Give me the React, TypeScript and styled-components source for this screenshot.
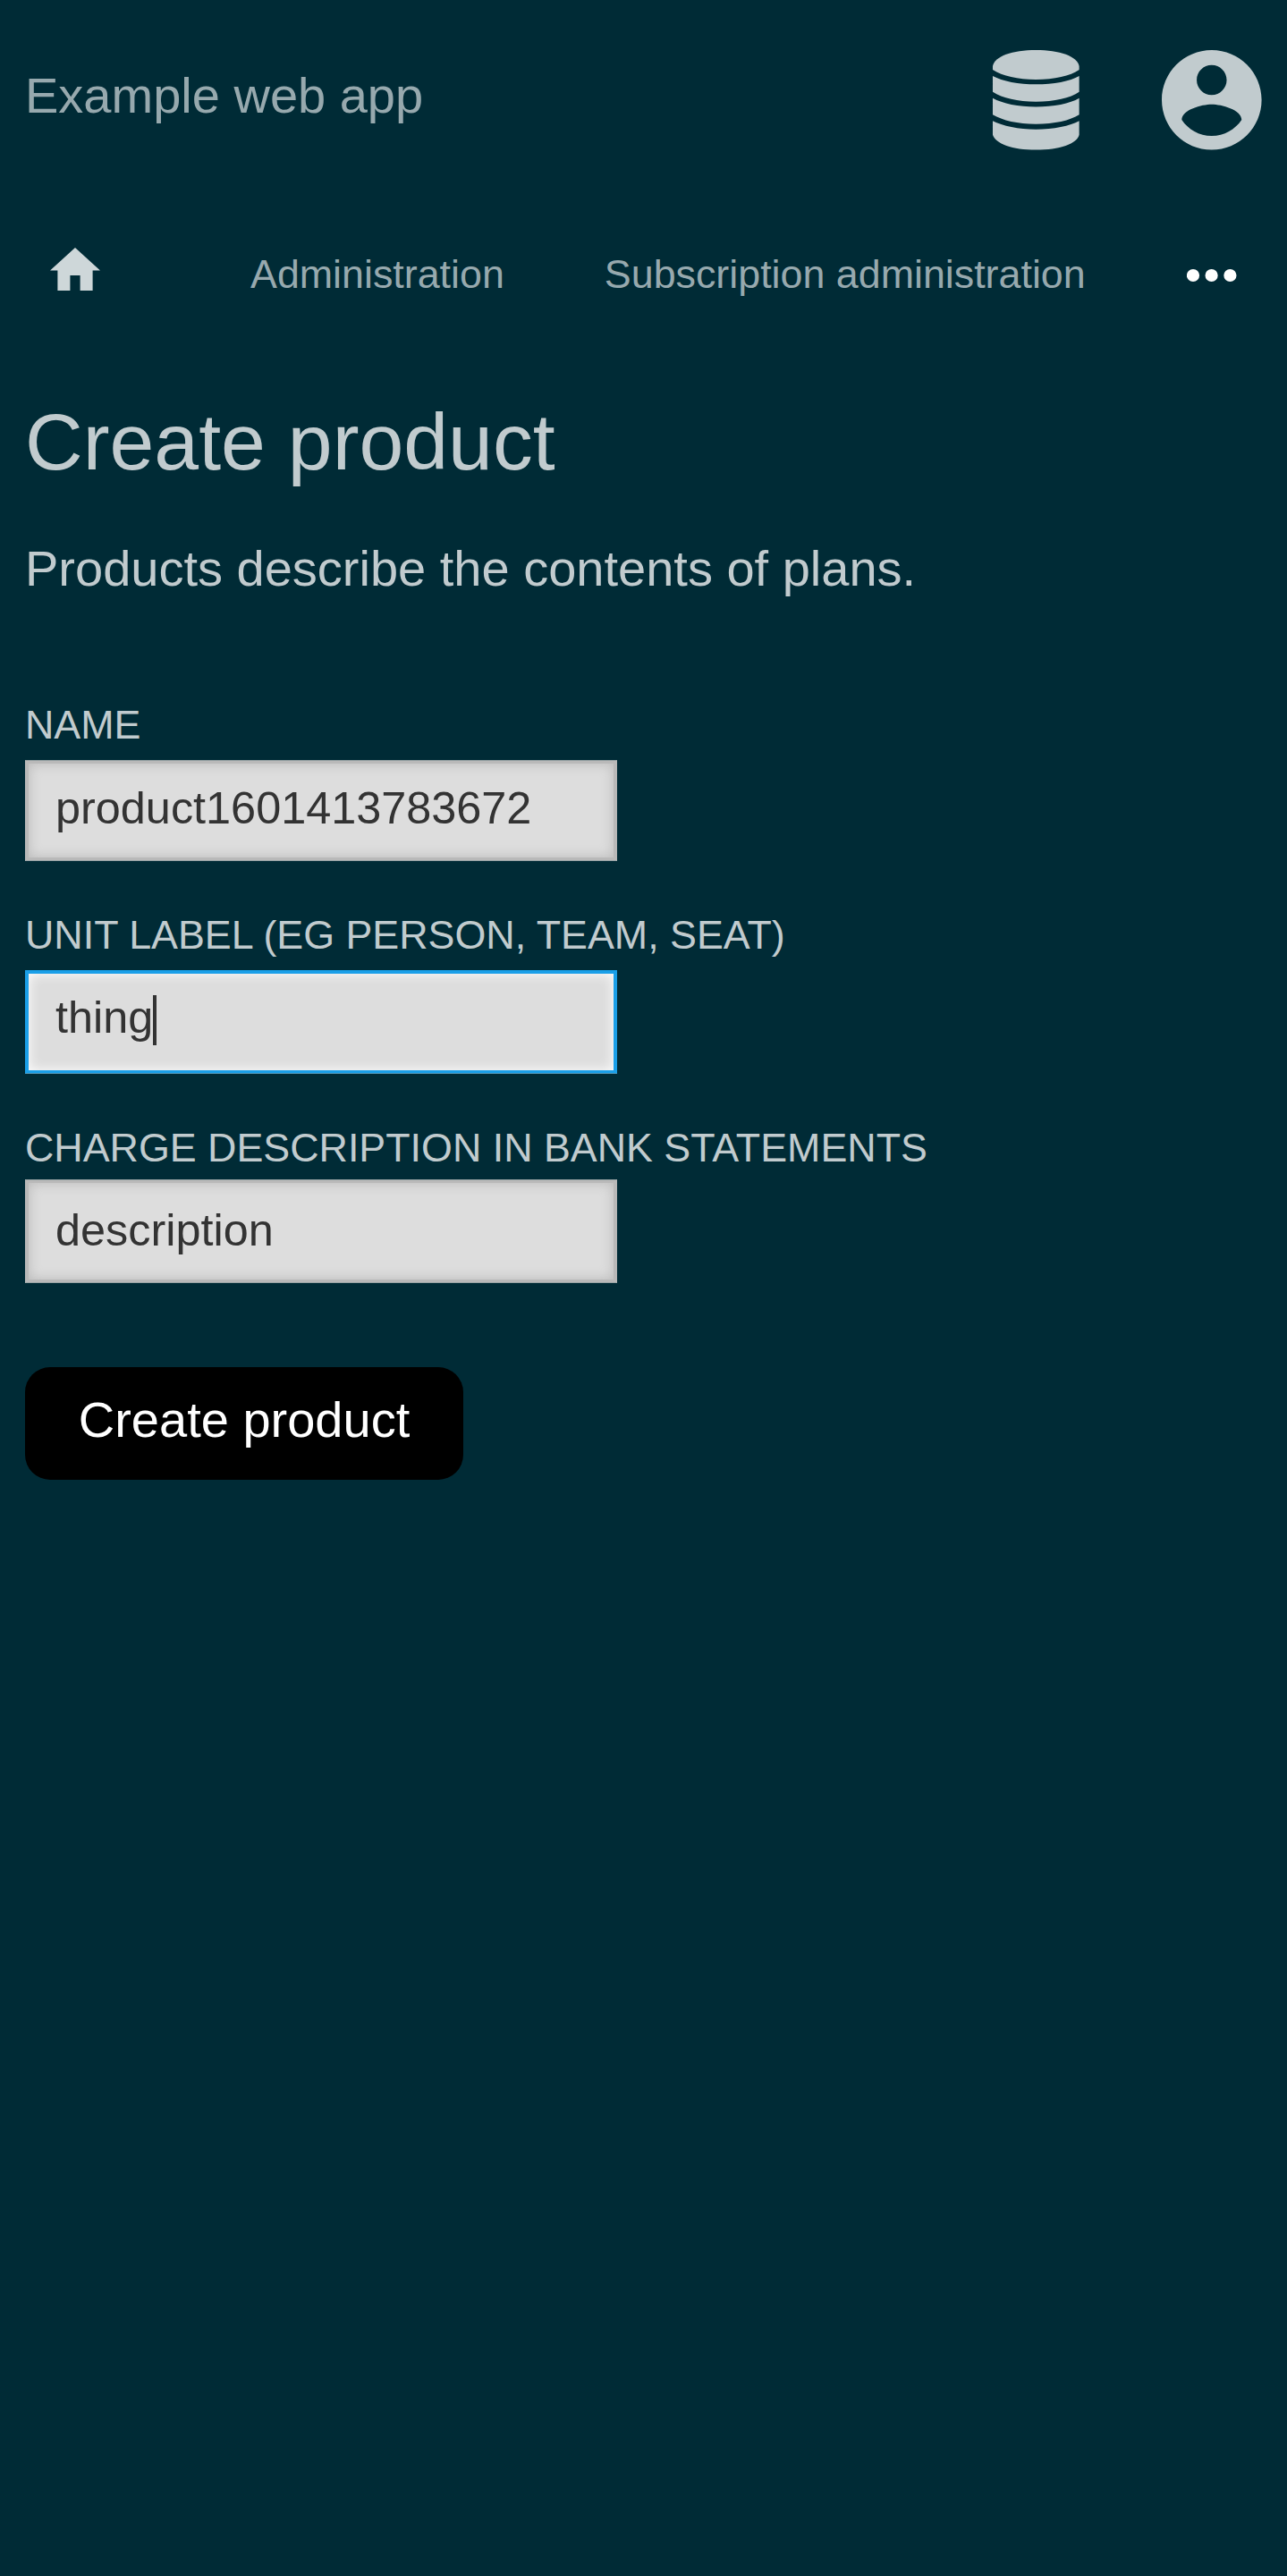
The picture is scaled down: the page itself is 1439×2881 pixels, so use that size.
import React from "react";
import styled, { createGlobalStyle } from "styled-components";

const GlobalStyle = createGlobalStyle`
  body {
    margin: 0;
    background: #002b36;
    color: #c1cbce;
    font: 56px/64px "Liberation Sans", Arial, sans-serif;
  }
  *, *::before, *::after { box-sizing: border-box; }
`;

const Page = styled.div`
  display: flex;
  flex-direction: column;
  min-height: 2881px;
`;

const Header = styled.header`
  display: flex;
  align-items: center;
  height: 224px;
  padding: 0 28.4px 0 28px;
`;

const Brand = styled.span`
  flex: 1;
  color: #97a9ae;
  padding-bottom: 10px;
`;

const HeaderIcons = styled.div`
  display: flex;
  gap: 84px;
`;

const HeaderIcon = styled.svg`
  display: block;
  width: 111.6px;
  height: 111.6px;
  fill: #c1cbce;
`;

const Nav = styled.nav`
  display: flex;
  align-items: center;
  height: 168px;
  padding: 0 56px;
  font-size: 44.8px;
`;

const HomeIcon = styled.svg`
  width: 56px;
  height: 48px;
  margin: 0 168px 14px 0;
  fill: #ced7d9;
`;

const NavLink = styled.a`
  color: #97a9ae;
  margin: 0 112px 4px 0;
  white-space: nowrap;
`;

const MoreIcon = styled.svg`
  width: 56px;
  height: 16px;
  margin-left: auto;
  fill: #fff;
`;

const Content = styled.main`
  display: flex;
  flex-direction: column;
  align-items: flex-start;
  padding: 52px 28px;
`;

const Title = styled.h1`
  margin: 0;
  font-size: 89.6px;
  font-weight: 400;
  line-height: 100px;
`;

const Intro = styled.p`
  margin: 60px 0 0;
`;

const Form = styled.form`
  display: flex;
  flex-direction: column;
  align-items: flex-start;
  margin-top: 117px;
`;

const Label = styled.label<{ $height?: number }>`
  font-size: 44.8px;
  line-height: 51px;
  height: ${(p) => p.$height ?? 65}px;
  text-transform: uppercase;
  white-space: nowrap;
`;

const Field = styled.div<{
  $focused?: boolean;
  $height: number;
  $lift: number;
  $gap?: number;
}>`
  display: flex;
  align-items: center;
  width: 662px;
  height: ${(p) => p.$height}px;
  margin-bottom: ${(p) => p.$gap ?? 57}px;
  padding: 0 33px ${(p) => p.$lift}px;
  border: 1px solid;
  border-color: ${(p) =>
    p.$focused ? "#1a9fe8 #1a9fe8 #5298b8" : "#99a3a5 #b9b9b9"};
  background: #ddd;
  box-shadow: ${(p) =>
    p.$focused
      ? "inset 0 0 0 3px #1a9fe8, inset 0 0 14px 3px #fff"
      : "inset 0 0 0 3px #b9b9b9, inset 0 0 14px 3px #b9b9b9"};
  color: #333;
  font-size: 50.4px;
  line-height: 56px;
`;

const Caret = styled.span`
  width: 4px;
  height: 56px;
  margin-top: 7px;
  background: #333;
`;

const Submit = styled.button`
  width: 490px;
  height: 126px;
  padding: 0 0 8px;
  border: 0;
  border-radius: 28px;
  background: #000;
  color: #fff;
  font: inherit;
`;

export default function App() {
  return (
    <Page>
      <GlobalStyle />
      <Header>
        <Brand>Example web app</Brand>
        <HeaderIcons>
          <HeaderIcon viewBox="0 0 112 112">
            <path d="M7 18C9 7 29 0 55.500 0s46.500 7 48.500 18v4C94 29 76 33 55.500 33S18 29 7 22Z" />
            <path d="M7 29C18 35 36 38.500 55.500 38.500S94 35 104 29V47C94 54 76 58 55.500 58S18 54 7 47Z" />
            <path d="M7 54C18 60 36 63.800 55.500 63.800S94 60 104 54V72.500C94 79 76 83 55.500 83S18 79 7 72.500Z" />
            <path d="M7 79.500C18 85 36 89 55.500 89S94 85 104 79.500V95C102 105 82 112 55.500 112S10 105 7 95Z" />
          </HeaderIcon>
          <HeaderIcon viewBox="2 2 20 20">
            <path d="M12 2C6.480 2 2 6.480 2 12s4.480 10 10 10 10-4.480 10-10S17.520 2 12 2zm0 3c1.660 0 3 1.340 3 3s-1.340 3-3 3-3-1.340-3-3 1.340-3 3-3zm0 14.200c-2.500 0-4.710-1.280-6-3.220.03-1.990 4-3.080 6-3.080 1.990 0 5.970 1.090 6 3.080-1.290 1.940-3.500 3.220-6 3.220z" />
          </HeaderIcon>
        </HeaderIcons>
      </Header>
      <Nav>
        <HomeIcon viewBox="2 3 20 17" preserveAspectRatio="none">
          <path d="M10 20v-6h4v6h5v-8h3L12 3 2 12h3v8z" />
        </HomeIcon>
        <NavLink>Administration</NavLink>
        <NavLink>Subscription administration</NavLink>
        <MoreIcon viewBox="0 0 56 16">
          <circle cx="7" cy="8" r="7.100" />
          <circle cx="27.600" cy="8" r="7.100" />
          <circle cx="48.400" cy="8" r="7.100" />
        </MoreIcon>
      </Nav>
      <Content>
        <Title>Create product</Title>
        <Intro>Products describe the contents of plans.</Intro>
        <Form>
          <Label>Name</Label>
          <Field $height={113} $lift={6}>
            product1601413783672
          </Field>
          <Label>Unit label (eg person, team, seat)</Label>
          <Field $focused $height={116} $lift={11}>
            thing
            <Caret />
          </Field>
          <Label $height={61}>Charge description in bank statements</Label>
          <Field $height={116} $lift={3} $gap={94}>
            description
          </Field>
          <Submit type="button">Create product</Submit>
        </Form>
      </Content>
    </Page>
  );
}
